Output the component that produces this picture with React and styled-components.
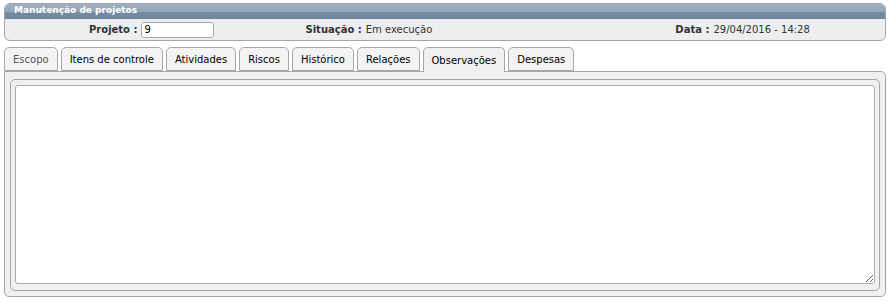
import { createGlobalStyle } from "styled-components";
import styled from "styled-components";

const GlobalStyle = createGlobalStyle`
  html, body {
    margin: 0;
    padding: 0;
    background: #ffffff;
  }
  body {
    font-family: "DejaVu Sans", Verdana, sans-serif;
    font-size: 10px;
    color: #000;
  }
`;

const Page = styled.div`
  width: 890px;
  height: 302px;
  box-sizing: border-box;
  padding: 3px 4px 0 4px;
  display: flex;
  flex-direction: column;
`;

const HeaderBox = styled.div`
  border: 1px solid #a3a6a9;
  border-radius: 6px;
  overflow: hidden;
  background: #eceeef;
`;

const TitleBar = styled.div`
  height: 14px;
  line-height: 13px;
  padding-left: 9px;
  color: #ffffff;
  font-weight: bold;
  font-size: 9px;
  background: linear-gradient(#a0b0c2 0%, #92a4b7 60%, #74889f 61%, #74889f 100%);
  border-bottom: 1px solid #6d8098;
`;

const InfoRow = styled.div`
  height: 21px;
  display: flex;
  align-items: center;
  color: #333;
`;

const Field = styled.div`
  display: flex;
  align-items: center;
  margin-left: ${(p) => p.$left}px;
  gap: 4px;
`;

const Label = styled.span`
  font-weight: bold;
  color: #333;
`;

const Value = styled.span`
  color: #333;
`;

const TextInput = styled.input`
  box-sizing: border-box;
  width: 73px;
  height: 16px;
  padding: 0 2px;
  border: 1px solid #a9a9a9;
  border-radius: 3px;
  font-family: inherit;
  font-size: 10px;
  color: #000;
  background: #fff;
`;

const TabBar = styled.div`
  display: flex;
  gap: 3px;
  margin-top: 6px;
  height: 24px;
  position: relative;
  z-index: 1;
`;

const Tab = styled.div`
  box-sizing: border-box;
  height: ${(p) => (p.$active ? 25 : 24)}px;
  padding: 1px 8px 0 8px;
  display: flex;
  align-items: center;
  justify-content: center;
  border: 1px solid #a6a9ac;
  border-bottom: ${(p) => (p.$active ? "none" : "1px solid #a6a9ac")};
  border-radius: 5px 5px 0 0;
  background: ${(p) => (p.$active ? "#eef0f1" : "#f3f3f3")};
  color: ${(p) => (p.$muted ? "#555" : "#000")};
  font-size: 10px;
  white-space: nowrap;
`;

const Panel = styled.div`
  box-sizing: border-box;
  height: 226px;
  border: 1px solid #a3a6a9;
  border-radius: 0 5px 5px 5px;
  background: #eef0f1;
  padding: 7px 5px 5px 5px;
`;

const Inner = styled.div`
  box-sizing: border-box;
  height: 100%;
  border: 1px solid #a3a6a9;
  border-radius: 5px;
  padding: 5px 4px 6px 4px;
  display: flex;
`;

const Area = styled.textarea`
  flex: 1;
  box-sizing: border-box;
  border: 1px solid #a9abad;
  border-radius: 3px;
  background: #fff;
  resize: both;
  font-family: inherit;
  font-size: 10px;
  outline: none;
`;

const tabs = [
  "Escopo",
  "Itens de controle",
  "Atividades",
  "Riscos",
  "Histórico",
  "Relações",
  "Observações",
  "Despesas",
];

export default function App() {
  return (
    <>
      <GlobalStyle />
      <Page>
        <HeaderBox>
          <TitleBar>Manutenção de projetos</TitleBar>
          <InfoRow>
            <Field $left={84}>
              <Label>Projeto :</Label>
              <TextInput defaultValue="9" />
            </Field>
            <Field $left={91}>
              <Label>Situação :</Label>
              <Value>Em execução</Value>
            </Field>
            <Field $left={243}>
              <Label>Data :</Label>
              <Value>29/04/2016 - 14:28</Value>
            </Field>
          </InfoRow>
        </HeaderBox>
        <TabBar>
          {tabs.map((t) => (
            <Tab key={t} $active={t === "Observações"} $muted={t === "Escopo"}>
              {t}
            </Tab>
          ))}
        </TabBar>
        <Panel>
          <Inner>
            <Area />
          </Inner>
        </Panel>
      </Page>
    </>
  );
}
